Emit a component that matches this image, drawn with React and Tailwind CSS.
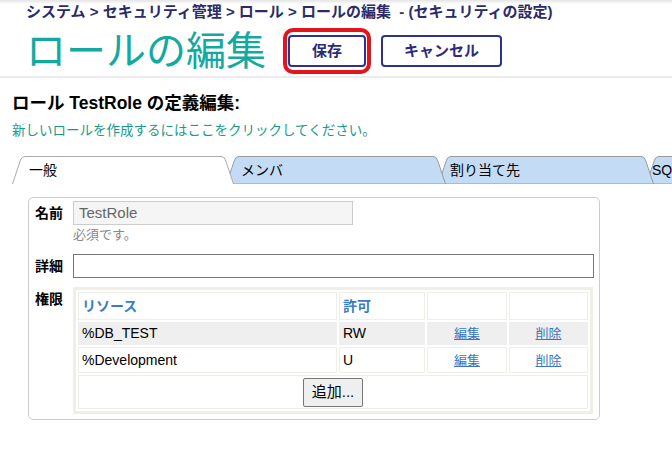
import React from "react";

const tabs = [
  { label: "一般", w: 222, pl: 17, active: true },
  { label: "メンバ", w: 220, pl: 15 },
  { label: "割り当て先", w: 216, pl: 12 },
  { label: "SQL 管理者特権", w: 200, pl: 6 },
];

function Tab({ label, w, pl, active, z }) {
  const d = `M0.5 28 L8.5 4 Q9.8 0.5 13 0.5 L${w - 13} 0.5 Q${w - 9.8} 0.5 ${w - 8.5} 4 L${w - 0.5} 28`;
  return (
    <div
      className="relative h-[28px] shrink-0 -ml-[8px] first:ml-0 flex items-center text-[14px] text-black whitespace-nowrap"
      style={{ width: w, paddingLeft: pl, zIndex: z }}
    >
      <svg className="absolute left-0 top-0" width={w} height="28" viewBox={`0 0 ${w} 28`}>
        {active ? (
          <path d={d} fill="#ffffff" stroke="#aaaaaa" strokeWidth="1" />
        ) : (
          <path d={d + " Z"} fill="#c4dbf6" stroke="#9a9a9a" strokeWidth="1" />
        )}
      </svg>
      <span className="relative">{label}</span>
    </div>
  );
}

const rows = [
  { res: "%DB_TEST", perm: "RW", bg: "bg-[#efefef] border-[#efefef]" },
  { res: "%Development", perm: "U", bg: "bg-white border-[#efefe8]" },
];

export default function App() {
  return (
    <div className="w-[672px] h-[456px] overflow-hidden bg-white font-['Liberation_Sans','Noto_Sans_CJK_JP',sans-serif]">
      {/* top shadow + breadcrumb */}
      <div className="h-[4px] bg-linear-to-b from-[#e4e4e4] to-white" />
      <div className="h-[24px] pl-[26px] text-[15px] leading-[16px] font-bold text-[#2b2b6b] whitespace-nowrap">
        システム &gt; セキュリティ管理 &gt; ロール &gt; ロールの編集&nbsp; - (セキュリティの設定)
      </div>

      {/* title row */}
      <div className="h-[46px] flex items-center pl-[26px]">
        <h1 className="text-[40px] leading-[46px] text-[#14a9a0] font-normal whitespace-nowrap">ロールの編集</h1>
        <div className="ml-[17px] border-4 border-[#e3141b] rounded-[10px] px-[1px] py-[3px]">
          <button className="w-[78px] h-[32px] border-2 border-[#2e3190] rounded-[4px] bg-white text-[15px] font-bold text-[#2b2b7b]">
            保存
          </button>
        </div>
        <button className="ml-[10px] w-[121px] h-[32px] border-2 border-[#2e3190] rounded-[4px] bg-white text-[15px] font-bold text-[#2b2b7b]">
          キャンセル
        </button>
      </div>
      <div className="mt-[2px] h-[2px] bg-[#ececec]" />

      {/* content */}
      <div className="pl-[12px]">
        <h2 className="mt-[13px] text-[17.5px] leading-[24px] font-bold text-black whitespace-nowrap">
          ロール TestRole の定義編集:
        </h2>
        <div className="mt-[6px] text-[13.5px] leading-[20px] text-[#1b9a8a] whitespace-nowrap">
          新しいロールを作成するにはここをクリックしてください。
        </div>

        {/* tabs */}
        <div className="mt-[15px] flex overflow-hidden">
          {tabs.map((t, i) => (
            <Tab key={t.label} {...t} z={10 - i} />
          ))}
        </div>

        {/* panel */}
        <div className="mt-[13px] ml-[16px] w-[572px] border border-[#cccccc] rounded-[5px] pl-[6px] pr-[5px] pt-[3px] pb-[5px] text-[14px]">
          <div className="flex">
            <div className="w-[38px] leading-[24px] font-bold text-black">名前</div>
            <div>
              <div className="w-[280px] h-[24px] border border-[#cccccc] bg-[#f5f5f5] pl-[5px] text-[15px] leading-[22px] text-[#666666]">
                TestRole
              </div>
              <div className="mt-[1px] text-[13px] leading-[17px] text-[#888888]">必須です。</div>
            </div>
          </div>

          <div className="mt-[11px] flex">
            <div className="w-[38px] leading-[24px] font-bold text-black">詳細</div>
            <div className="flex-1 h-[24px] border border-[#767676] bg-white" />
          </div>

          <div className="mt-[9px] flex">
            <div className="w-[38px] pt-[3px] leading-[18px] font-bold text-black">権限</div>
            <div className="w-[520px] border-[3px] border-[#efefe7]">
              <table className="w-full border-separate border-spacing-[2px] text-[14px]">
                <thead>
                  <tr className="h-[28px]">
                    <th className="w-[259px] border border-[#efefe7] text-left pl-[3px] font-bold text-[#3a7cc8]">リソース</th>
                    <th className="w-[86px] border border-[#efefe7] text-left pl-[3px] font-bold text-[#3a7cc8]">許可</th>
                    <th className="w-[80px] border border-[#efefe7]" />
                    <th className="w-[79px] border border-[#efefe7]" />
                  </tr>
                </thead>
                <tbody>
                  {rows.map((r, i) => (
                    <tr key={r.res} className={i === 0 ? "h-[23px]" : "h-[26px]"}>
                      <td className={`border pl-[3px] text-black leading-[19px] ${r.bg}`}>{r.res}</td>
                      <td className={`border pl-[3px] text-black leading-[19px] ${r.bg}`}>{r.perm}</td>
                      <td className={`border text-center leading-[19px] ${r.bg}`}>
                        <a className="text-[13px] text-[#3b76c0] underline">編集</a>
                      </td>
                      <td className={`border text-center leading-[19px] ${r.bg}`}>
                        <a className="text-[13px] text-[#3b76c0] underline">削除</a>
                      </td>
                    </tr>
                  ))}
                  <tr className="h-[34px]">
                    <td colSpan={4} className="border border-[#efefe7] text-center">
                      <button className="w-[60px] h-[29px] border border-[#767676] rounded-[2px] bg-[#efefef] text-[15px] text-black align-middle">
                        追加...
                      </button>
                    </td>
                  </tr>
                </tbody>
              </table>
            </div>
          </div>
        </div>
      </div>
    </div>
  );
}
